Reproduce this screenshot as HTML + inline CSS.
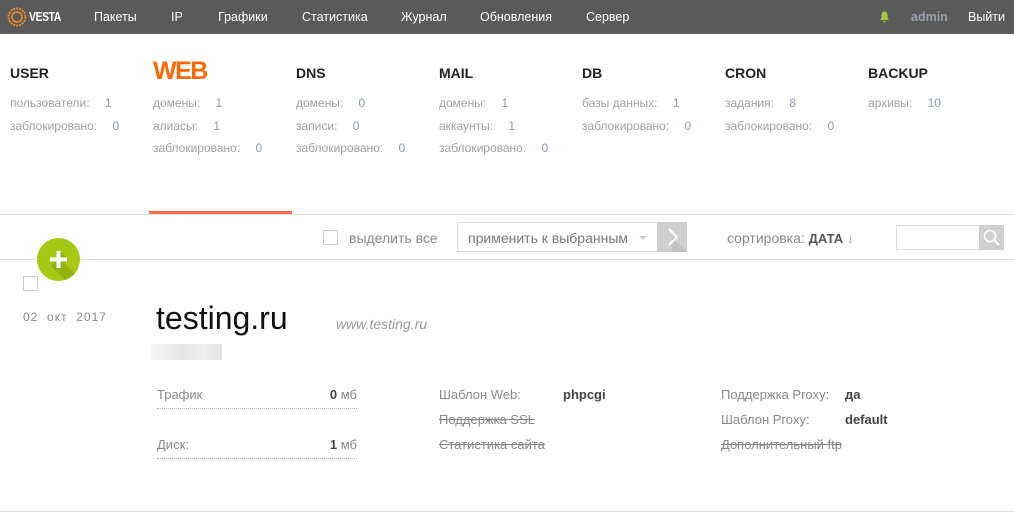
<!DOCTYPE html>
<html><head><meta charset="utf-8"><style>
*{margin:0;padding:0;box-sizing:border-box}
body{width:1014px;height:513px;background:#fff;font-family:"Liberation Sans",sans-serif;position:relative;overflow:hidden}
.a{position:absolute;white-space:nowrap}
.nav{position:absolute;left:0;top:0;width:1014px;height:34px;background:#5a5a5a}
.nav .a{color:#fff;font-size:12.5px;top:10px}
.h{font-size:14px;font-weight:bold;color:#222;top:65px}
.s{font-size:12px;color:#a0a0a0}
.s b{font-weight:normal;color:#8a9bb0;margin-left:12px}
.l{font-size:13px;color:#888}
.st{text-decoration:line-through}
.v{font-size:13px;font-weight:bold;color:#444}
.dot{border-bottom:1px dotted #bbb}
</style></head><body>
<div class="nav">
<svg class="a" style="left:7px;top:7px" width="20" height="20" viewBox="0 0 20 20"><circle cx="10" cy="10" r="8.5" fill="none" stroke="#f08a24" stroke-width="2" stroke-dasharray="2 1"/><circle cx="10" cy="10" r="5" fill="none" stroke="#f08a24" stroke-width="1.5"/></svg>
<div class="a" style="left:29px;top:9px;font-size:13px;font-weight:bold;letter-spacing:-0.5px;color:#fff;transform:scaleX(0.8);transform-origin:left">VESTA</div>
<div class="a" style="left:94px">Пакеты</div>
<div class="a" style="left:171px">IP</div>
<div class="a" style="left:218px">Графики</div>
<div class="a" style="left:302px">Статистика</div>
<div class="a" style="left:401px">Журнал</div>
<div class="a" style="left:480px">Обновления</div>
<div class="a" style="left:586px">Сервер</div>
<svg class="a" style="left:879px;top:11px" width="11" height="12" viewBox="0 0 11 12"><path d="M5.5 0.5c-2 0-3 1.5-3 3.5v3L1 9h9L8.5 7V4c0-2-1-3.5-3-3.5zM4 10h3l-1.5 1.5z" fill="#a5c93a"/></svg>
<div class="a" style="left:911px;color:#9aa0a8;font-weight:bold">admin</div>
<div class="a" style="left:968px">Выйти</div>
</div>

<div class="a h" style="left:10px">USER</div>
<div class="a" style="left:153px;top:57px;font-size:25px;font-weight:bold;color:#ff6701;letter-spacing:-1.5px">WEB</div>
<div class="a h" style="left:296px">DNS</div>
<div class="a h" style="left:439px">MAIL</div>
<div class="a h" style="left:582px">DB</div>
<div class="a h" style="left:725px">CRON</div>
<div class="a h" style="left:868px">BACKUP</div>

<div class="a s" style="left:10px;top:96px">пользователи: <b>1</b></div>
<div class="a s" style="left:10px;top:119px">заблокировано: <b>0</b></div>
<div class="a s" style="left:153px;top:96px">домены: <b>1</b></div>
<div class="a s" style="left:153px;top:119px">алиасы: <b>1</b></div>
<div class="a s" style="left:153px;top:141px">заблокировано: <b>0</b></div>
<div class="a s" style="left:296px;top:96px">домены: <b>0</b></div>
<div class="a s" style="left:296px;top:119px">записи: <b>0</b></div>
<div class="a s" style="left:296px;top:141px">заблокировано: <b>0</b></div>
<div class="a s" style="left:439px;top:96px">домены: <b>1</b></div>
<div class="a s" style="left:439px;top:119px">аккаунты: <b>1</b></div>
<div class="a s" style="left:439px;top:141px">заблокировано: <b>0</b></div>
<div class="a s" style="left:582px;top:96px">базы данных: <b>1</b></div>
<div class="a s" style="left:582px;top:119px">заблокировано: <b>0</b></div>
<div class="a s" style="left:725px;top:96px">задания: <b>8</b></div>
<div class="a s" style="left:725px;top:119px">заблокировано: <b>0</b></div>
<div class="a s" style="left:868px;top:96px">архивы: <b>10</b></div>

<div class="a" style="left:0;top:214px;width:1014px;height:1px;background:#ddd"></div>
<div class="a" style="left:149px;top:211px;width:143px;height:3px;background:#ff6e4a"></div>
<div class="a" style="left:0;top:259px;width:1014px;height:1px;background:#ddd"></div>
<div class="a" style="left:0;top:511px;width:1014px;height:1px;background:#ddd"></div>

<div class="a" style="left:323px;top:230px;width:15px;height:15px;border:1px solid #ccc"></div>
<div class="a" style="left:349px;top:230px;font-size:14px;color:#888">выделить все</div>
<div class="a" style="left:457px;top:222px;width:201px;height:30px;border:1px solid #ddd"></div>
<div class="a" style="left:468px;top:230px;font-size:14px;color:#777">применить к выбранным</div>
<div class="a" style="left:639px;top:236px;border-left:4px solid transparent;border-right:4px solid transparent;border-top:4px solid #ccc"></div>
<div class="a" style="left:657px;top:222px;width:30px;height:30px;background:#cfcfcf"></div>
<svg class="a" style="left:657px;top:222px" width="30" height="30"><path d="M15 15l15 15h-15z" fill="#c2c2c2"/><path d="M12 7l8 8-8 8" stroke="#fff" stroke-width="2" fill="none"/></svg>
<div class="a" style="left:727px;top:230px;font-size:14px;color:#888">сортировка: <b style="color:#555;font-size:13px">ДАТА</b> <span style="color:#aaa">↓</span></div>
<div class="a" style="left:896px;top:225px;width:84px;height:25px;border:1px solid #ddd"></div>
<div class="a" style="left:979px;top:225px;width:25px;height:25px;background:#cfcfcf"></div>
<svg class="a" style="left:979px;top:225px" width="25" height="25"><circle cx="11" cy="11" r="5.5" stroke="#fff" stroke-width="1.6" fill="none"/><path d="M15 15l5 5" stroke="#fff" stroke-width="2"/></svg>

<svg class="a" style="left:37px;top:238px" width="43" height="43" viewBox="0 0 43 43"><defs><clipPath id="c"><circle cx="21.5" cy="21.5" r="21.5"/></clipPath></defs><circle cx="21.5" cy="21.5" r="21.5" fill="#a5c912"/><path d="M24 14l6 6-4 4 20 20H30L14 28z" fill="#94b20f" clip-path="url(#c)"/><path d="M21.5 13v17M13 21.5h17" stroke="#fff" stroke-width="4"/></svg>
<div class="a" style="left:23px;top:276px;width:15px;height:15px;border:1px solid #ccc;background:#fff"></div>
<div class="a" style="left:23px;top:310px;font-size:12px;color:#888;letter-spacing:1px">02 &nbsp;окт &nbsp;2017</div>

<div class="a" style="left:156px;top:300px;font-size:32px;color:#111">testing.ru</div>
<div class="a" style="left:336px;top:316px;font-size:14px;font-style:italic;color:#999">www.testing.ru</div>
<div class="a" style="left:151px;top:344px;width:71px;height:16px;background:linear-gradient(90deg,#f4f4f4,#ececec 30%,#e3e3e3 45%,#ebebeb 60%,#f0f0f0 75%,#e3e3e3)"></div>

<div class="a l dot" style="left:157px;top:387px;width:200px;height:22px">Трафик<span style="position:absolute;right:0"><b style="color:#444">0</b> мб</span></div>
<div class="a l dot" style="left:157px;top:437px;width:200px;height:22px">Диск:<span style="position:absolute;right:0"><b style="color:#444">1</b> мб</span></div>
<div class="a l" style="left:439px;top:387px">Шаблон Web:</div>
<div class="a v" style="left:563px;top:387px">phpcgi</div>
<div class="a l st" style="left:439px;top:412px">Поддержка SSL</div>
<div class="a l st" style="left:439px;top:437px">Статистика сайта</div>
<div class="a l" style="left:721px;top:387px">Поддержка Proxy:</div>
<div class="a v" style="left:845px;top:387px">да</div>
<div class="a l" style="left:721px;top:412px">Шаблон Proxy:</div>
<div class="a v" style="left:845px;top:412px">default</div>
<div class="a l st" style="left:721px;top:437px">Дополнительный ftp</div>
</body></html>
